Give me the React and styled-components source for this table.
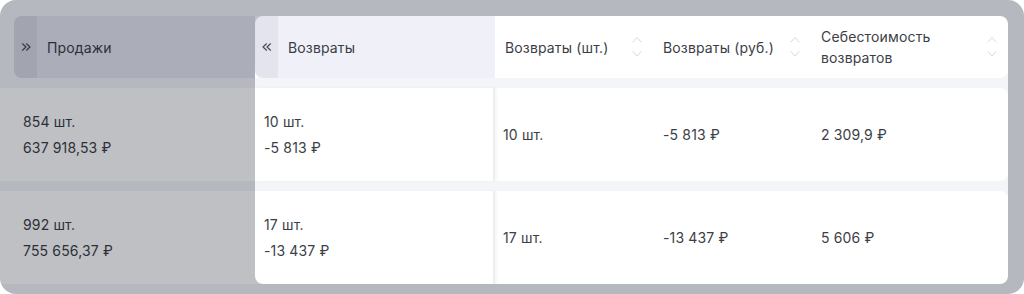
import styled, { createGlobalStyle } from "styled-components";

const GlobalStyle = createGlobalStyle`
  html, body {
    margin: 0;
    padding: 0;
    background: #ffffff;
  }
  body {
    font-family: Inter, "Noto Sans", "Liberation Sans", sans-serif;
    color: #3b3e47;
  }
`;

const Frame = styled.div`
  position: relative;
  width: 1024px;
  height: 294px;
  box-sizing: border-box;
  padding: 16px 16px 0 0;
  border-radius: 16px;
  overflow: hidden;
  background: #f3f5f8;
`;

const cols = "241px 240px 158px 158px 197px";

const HeaderRow = styled.div`
  display: grid;
  grid-template-columns: ${cols};
  height: 62px;
  margin-left: 14px;
  background: #ffffff;
  border-radius: 8px;
`;

const HeadCell = styled.div`
  display: flex;
  align-items: center;
  font-size: 14px;
  line-height: 21px;
  letter-spacing: 0.15px;
  background: ${(p) => (p.$tone === "dim" ? "#e5e7ef" : p.$tone === "lit" ? "#eff0f8" : "transparent")};
  border-radius: ${(p) => (p.$first ? "8px 0 0 8px" : "0")};
  padding: ${(p) => (p.$toggle ? "0" : "0 11px 0 10px")};
  overflow: hidden;
`;

const Toggle = styled.div`
  width: 23px;
  align-self: stretch;
  display: flex;
  align-items: center;
  justify-content: center;
  background: ${(p) => (p.$dim ? "#d8dae5" : "#e3e4ee")};
  margin-right: 10px;
`;

const HeadText = styled.span`
  flex: 1;
`;

const SortIcon = styled.svg`
  flex: none;
  width: 10px;
  height: 24px;
`;

const Body = styled.div`
  display: flex;
  flex-direction: column;
  gap: 10px;
  margin-top: 10px;
`;

const Row = styled.div`
  display: grid;
  grid-template-columns: ${cols};
  height: 93px;
  padding-left: 14px;
  background: #ffffff;
  border-radius: 0 8px 8px 0;
`;

const Cell = styled.div`
  display: flex;
  flex-direction: column;
  justify-content: center;
  font-size: 14px;
  line-height: 26px;
  letter-spacing: 0.15px;
  padding-left: ${(p) => p.$pad || 10}px;
  white-space: nowrap;
  ${(p) =>
    p.$split &&
    `
    border-right: 2px solid #eceef2;
    box-shadow: 2px 0 3px rgba(20, 30, 60, 0.04);
  `}
`;

const Spotlight = styled.div`
  position: absolute;
  left: 255px;
  top: 16px;
  width: 753px;
  height: 268px;
  border-radius: 8px;
  box-shadow: 0 0 0 2000px rgba(0, 3, 19, 0.25);
  pointer-events: none;
`;

function Sort() {
  return (
    <SortIcon viewBox="0 0 10 24" fill="none" stroke="#d6d8e1" strokeWidth="1" strokeLinecap="round" strokeLinejoin="round">
      <path d="M1 7 L5 2.5 L9 7" />
      <path d="M1 16.5 L5 21 L9 16.5" />
    </SortIcon>
  );
}

function Chevrons({ dir }) {
  const d =
    dir === "right"
      ? ["M1.5 0.8 L5 4 L1.5 7.2", "M5.5 0.8 L9 4 L5.5 7.2"]
      : ["M4.5 0.8 L1 4 L4.5 7.2", "M8.5 0.8 L5 4 L8.5 7.2"];
  return (
    <svg width="10" height="8" viewBox="0 0 10 8" fill="none" stroke="#4a4d57" strokeWidth="1.2" strokeLinecap="round" strokeLinejoin="round">
      <path d={d[0]} />
      <path d={d[1]} />
    </svg>
  );
}

const rows = [
  { sales: ["854 шт.", "637 918,53 ₽"], ret: ["10 шт.", "-5 813 ₽"], qty: "10 шт.", rub: "-5 813 ₽", cost: "2 309,9 ₽" },
  { sales: ["992 шт.", "755 656,37 ₽"], ret: ["17 шт.", "-13 437 ₽"], qty: "17 шт.", rub: "-13 437 ₽", cost: "5 606 ₽" },
];

export default function App() {
  return (
    <>
      <GlobalStyle />
      <Frame>
        <HeaderRow>
          <HeadCell $tone="dim" $first $toggle>
            <Toggle $dim>
              <Chevrons dir="right" />
            </Toggle>
            <HeadText>Продажи</HeadText>
          </HeadCell>
          <HeadCell $tone="lit" $first $toggle>
            <Toggle>
              <Chevrons dir="left" />
            </Toggle>
            <HeadText>Возвраты</HeadText>
          </HeadCell>
          <HeadCell>
            <HeadText>Возвраты (шт.)</HeadText>
            <Sort />
          </HeadCell>
          <HeadCell>
            <HeadText>Возвраты (руб.)</HeadText>
            <Sort />
          </HeadCell>
          <HeadCell>
            <HeadText>
              Себестоимость
              <br />
              возвратов
            </HeadText>
            <Sort />
          </HeadCell>
        </HeaderRow>
        <Body>
          {rows.map((r, i) => (
            <Row key={i}>
              <Cell $pad={9}>
                <span>{r.sales[0]}</span>
                <span>{r.sales[1]}</span>
              </Cell>
              <Cell $pad={9} $split>
                <span>{r.ret[0]}</span>
                <span>{r.ret[1]}</span>
              </Cell>
              <Cell $pad={8}>{r.qty}</Cell>
              <Cell>{r.rub}</Cell>
              <Cell>{r.cost}</Cell>
            </Row>
          ))}
        </Body>
        <Spotlight />
      </Frame>
    </>
  );
}
